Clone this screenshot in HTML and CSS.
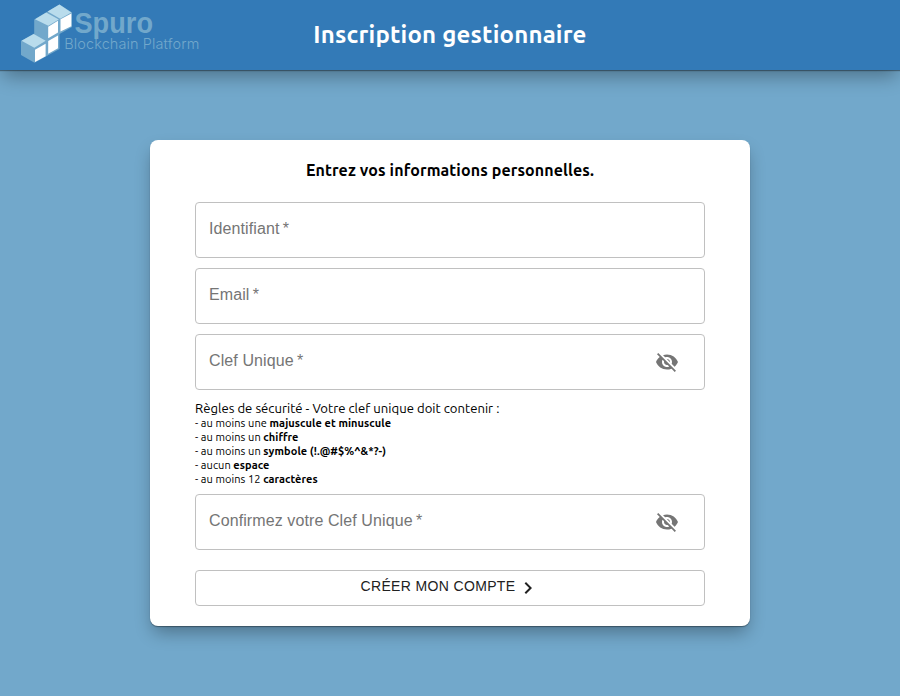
FILE: index.html
```html
<!DOCTYPE html>
<html lang="fr">
<head>
<meta charset="utf-8">
<title>Inscription gestionnaire</title>
<link rel="stylesheet" href="styles.css">
</head>
<body>
<header class="topbar">
  <svg class="logo" width="190" height="70" viewBox="0 0 190 70" role="img" aria-label="Spuro Blockchain Platform">
    <path class="cube-side" d="M34.200 19.500 59.500 4.500 72 12.500V27L59.500 34V49L34.500 62.800 21 55V41L34.200 33.500Z"/>
    <g class="cube-top">
      <path d="M35 19.200 46.200 12.500 58.800 19.500 48.300 25.700Z"/>
      <path d="M47.600 11.600 59.400 4.600 71.300 12.500 60.200 18.800Z"/>
      <path d="M21.500 40.700 33.700 34 45.700 40.700 34.300 47.700Z"/>
    </g>
    <g class="cube-front">
      <path d="M48.200 26.700 58 20.800V32.600L48.200 38.200Z"/>
      <path d="M60.500 19.300 71.300 13.500V26.300L60.500 31.500Z"/>
      <path d="M35 49.700 45.600 43.700V56.300L35 61.900Z"/>
      <path d="M48.200 41 58 35.400V48.200L48.200 53.800Z"/>
    </g>
    <text class="brand" x="74.500" y="33" textLength="78.500" lengthAdjust="spacingAndGlyphs">Spuro</text>
    <text class="tagline" x="64.300" y="48.500" textLength="135">Blockchain Platform</text>
  </svg>
  <h1 class="title">Inscription gestionnaire</h1>
</header>
<main class="card">
  <h2 class="heading">Entrez vos informations personnelles.</h2>
  <form class="form">
    <div class="field"><span class="label">Identifiant&thinsp;*</span></div>
    <div class="field"><span class="label">Email&thinsp;*</span></div>
    <div class="field"><span class="label">Clef Unique&thinsp;*</span>
      <svg class="eye" viewBox="0 0 24 24"><path d="M12 7c2.760 0 5 2.240 5 5 0 .65-.13 1.260-.36 1.830l2.920 2.920c1.510-1.260 2.700-2.890 3.430-4.750-1.730-4.390-6-7.500-11-7.500-1.400 0-2.740.25-3.980.7l2.160 2.160C10.740 7.130 11.350 7 12 7zM2 4.270l2.280 2.280.46.46C3.080 8.300 1.780 10.020 1 12c1.730 4.390 6 7.500 11 7.500 1.550 0 3.030-.3 4.380-.84l.42.42L19.730 22 21 20.730 3.270 3 2 4.270zM7.530 9.800l1.550 1.550c-.05.21-.08.43-.08.65 0 1.660 1.340 3 3 3 .22 0 .44-.03.65-.08l1.550 1.550c-.67.33-1.410.53-2.200.53-2.760 0-5-2.240-5-5 0-.79.2-1.530.53-2.200zm4.310-.78l3.150 3.150.02-.16c0-1.660-1.340-3-3-3l-.17.01z"/></svg>
    </div>
    <div class="rules">
      <p class="rules-title">Règles de sécurité - Votre clef unique doit contenir :</p>
      <ul class="rules-list">
        <li>- au moins une <b>majuscule et minuscule</b></li>
        <li>- au moins un <b>chiffre</b></li>
        <li>- au moins un <b>symbole (!.@#$%^&amp;*?-)</b></li>
        <li>- aucun <b>espace</b></li>
        <li>- au moins 12 <b>caractères</b></li>
      </ul>
    </div>
    <div class="field"><span class="label">Confirmez votre Clef Unique&thinsp;*</span>
      <svg class="eye" viewBox="0 0 24 24"><path d="M12 7c2.760 0 5 2.240 5 5 0 .65-.13 1.260-.36 1.830l2.920 2.920c1.510-1.260 2.700-2.890 3.430-4.750-1.730-4.390-6-7.500-11-7.500-1.400 0-2.740.25-3.980.7l2.160 2.160C10.740 7.130 11.350 7 12 7zM2 4.270l2.280 2.280.46.46C3.080 8.300 1.780 10.020 1 12c1.730 4.390 6 7.500 11 7.500 1.550 0 3.030-.3 4.380-.84l.42.42L19.730 22 21 20.730 3.270 3 2 4.270zM7.530 9.800l1.550 1.550c-.05.21-.08.43-.08.65 0 1.660 1.340 3 3 3 .22 0 .44-.03.65-.08l1.550 1.550c-.67.33-1.410.53-2.200.53-2.760 0-5-2.240-5-5 0-.79.2-1.530.53-2.200zm4.310-.78l3.150 3.150.02-.16c0-1.660-1.340-3-3-3l-.17.01z"/></svg>
    </div>
    <button class="submit" type="button"><span>CRÉER MON COMPTE</span>
      <svg class="chevron" viewBox="0 0 24 24"><path d="M10 6 8.590 7.410 13.170 12l-4.580 4.590L10 18l6-6z"/></svg>
    </button>
  </form>
</main>
</body>
</html>
```
FILE: styles.css
```css
* { box-sizing: border-box; }
body {
  margin: 0;
  height: 696px;
  overflow: hidden;
  background: #72a8cb;
  font-family: Ubuntu, "Noto Sans", sans-serif;
  color: #000;
}
.topbar {
  display: grid;
  grid-template-columns: 200px 1fr 200px;
  align-items: center;
  height: 70px;
  background: #337ab7;
  box-shadow: 0 1px 1px rgba(0,0,0,.35), 0 9px 18px -3px rgba(0,0,0,.33);
}
.logo { display: block; overflow: visible; }
.cube-top { fill: #b9dcec; }
.cube-side { fill: #72a8cb; }
.cube-front { fill: #fff; }
.brand { font: bold 29px "Liberation Sans", sans-serif; fill: #72a8cb; }
.tagline { font: 300 14.500px Inter, Roboto, sans-serif; fill: #72a8cb; }
.title {
  margin: 0;
  text-align: center;
  font-size: 24px;
  line-height: 28px;
  letter-spacing: .2px;
  color: #fff;
  white-space: nowrap;
}
.card {
  width: 600px;
  height: 486px;
  margin: 70px auto 0;
  padding: 20px 45px;
  background: #fff;
  border-radius: 8px;
  box-shadow: 0 1px 1px rgba(0,0,0,.35), 0 9px 18px -3px rgba(0,0,0,.33);
}
.heading {
  margin: 0 0 22px;
  text-align: center;
  font-size: 16px;
  line-height: 20px;
  letter-spacing: .11px;
  white-space: nowrap;
}
.form { display: flex; flex-direction: column; gap: 10px; }
.field {
  display: flex;
  align-items: center;
  justify-content: space-between;
  height: 56px;
  padding: 0 25px 0 13px;
  border: 1px solid #c0c0c0;
  border-radius: 4px;
}
.label {
  font: 16px/20px Helvetica, "Liberation Sans", sans-serif;
  color: #757575;
  letter-spacing: .1px;
  padding-bottom: 3px;
}
.eye { width: 24px; height: 24px; fill: #757575; }
.rules { height: 84px; white-space: nowrap; }
.rules-title { margin: 0; font-size: 13.120px; line-height: 16px; letter-spacing: .02px; }
.rules-list { margin: 0; padding: 0; list-style: none; font-size: 11px; line-height: 14px; letter-spacing: .065px; }
.submit {
  display: flex;
  align-items: center;
  justify-content: center;
  height: 36px;
  margin-top: 10px;
  padding: 0;
  border: 1px solid #c0c0c0;
  border-radius: 4px;
  background: #fff;
  color: #212121;
  font: 14px/16px Helvetica, "Liberation Sans", sans-serif;
  letter-spacing: .35px;
}
.submit span { padding-bottom: 4px; }
.chevron { width: 24px; height: 24px; margin: 0 -1px 0 1px; fill: #212121; }
```
